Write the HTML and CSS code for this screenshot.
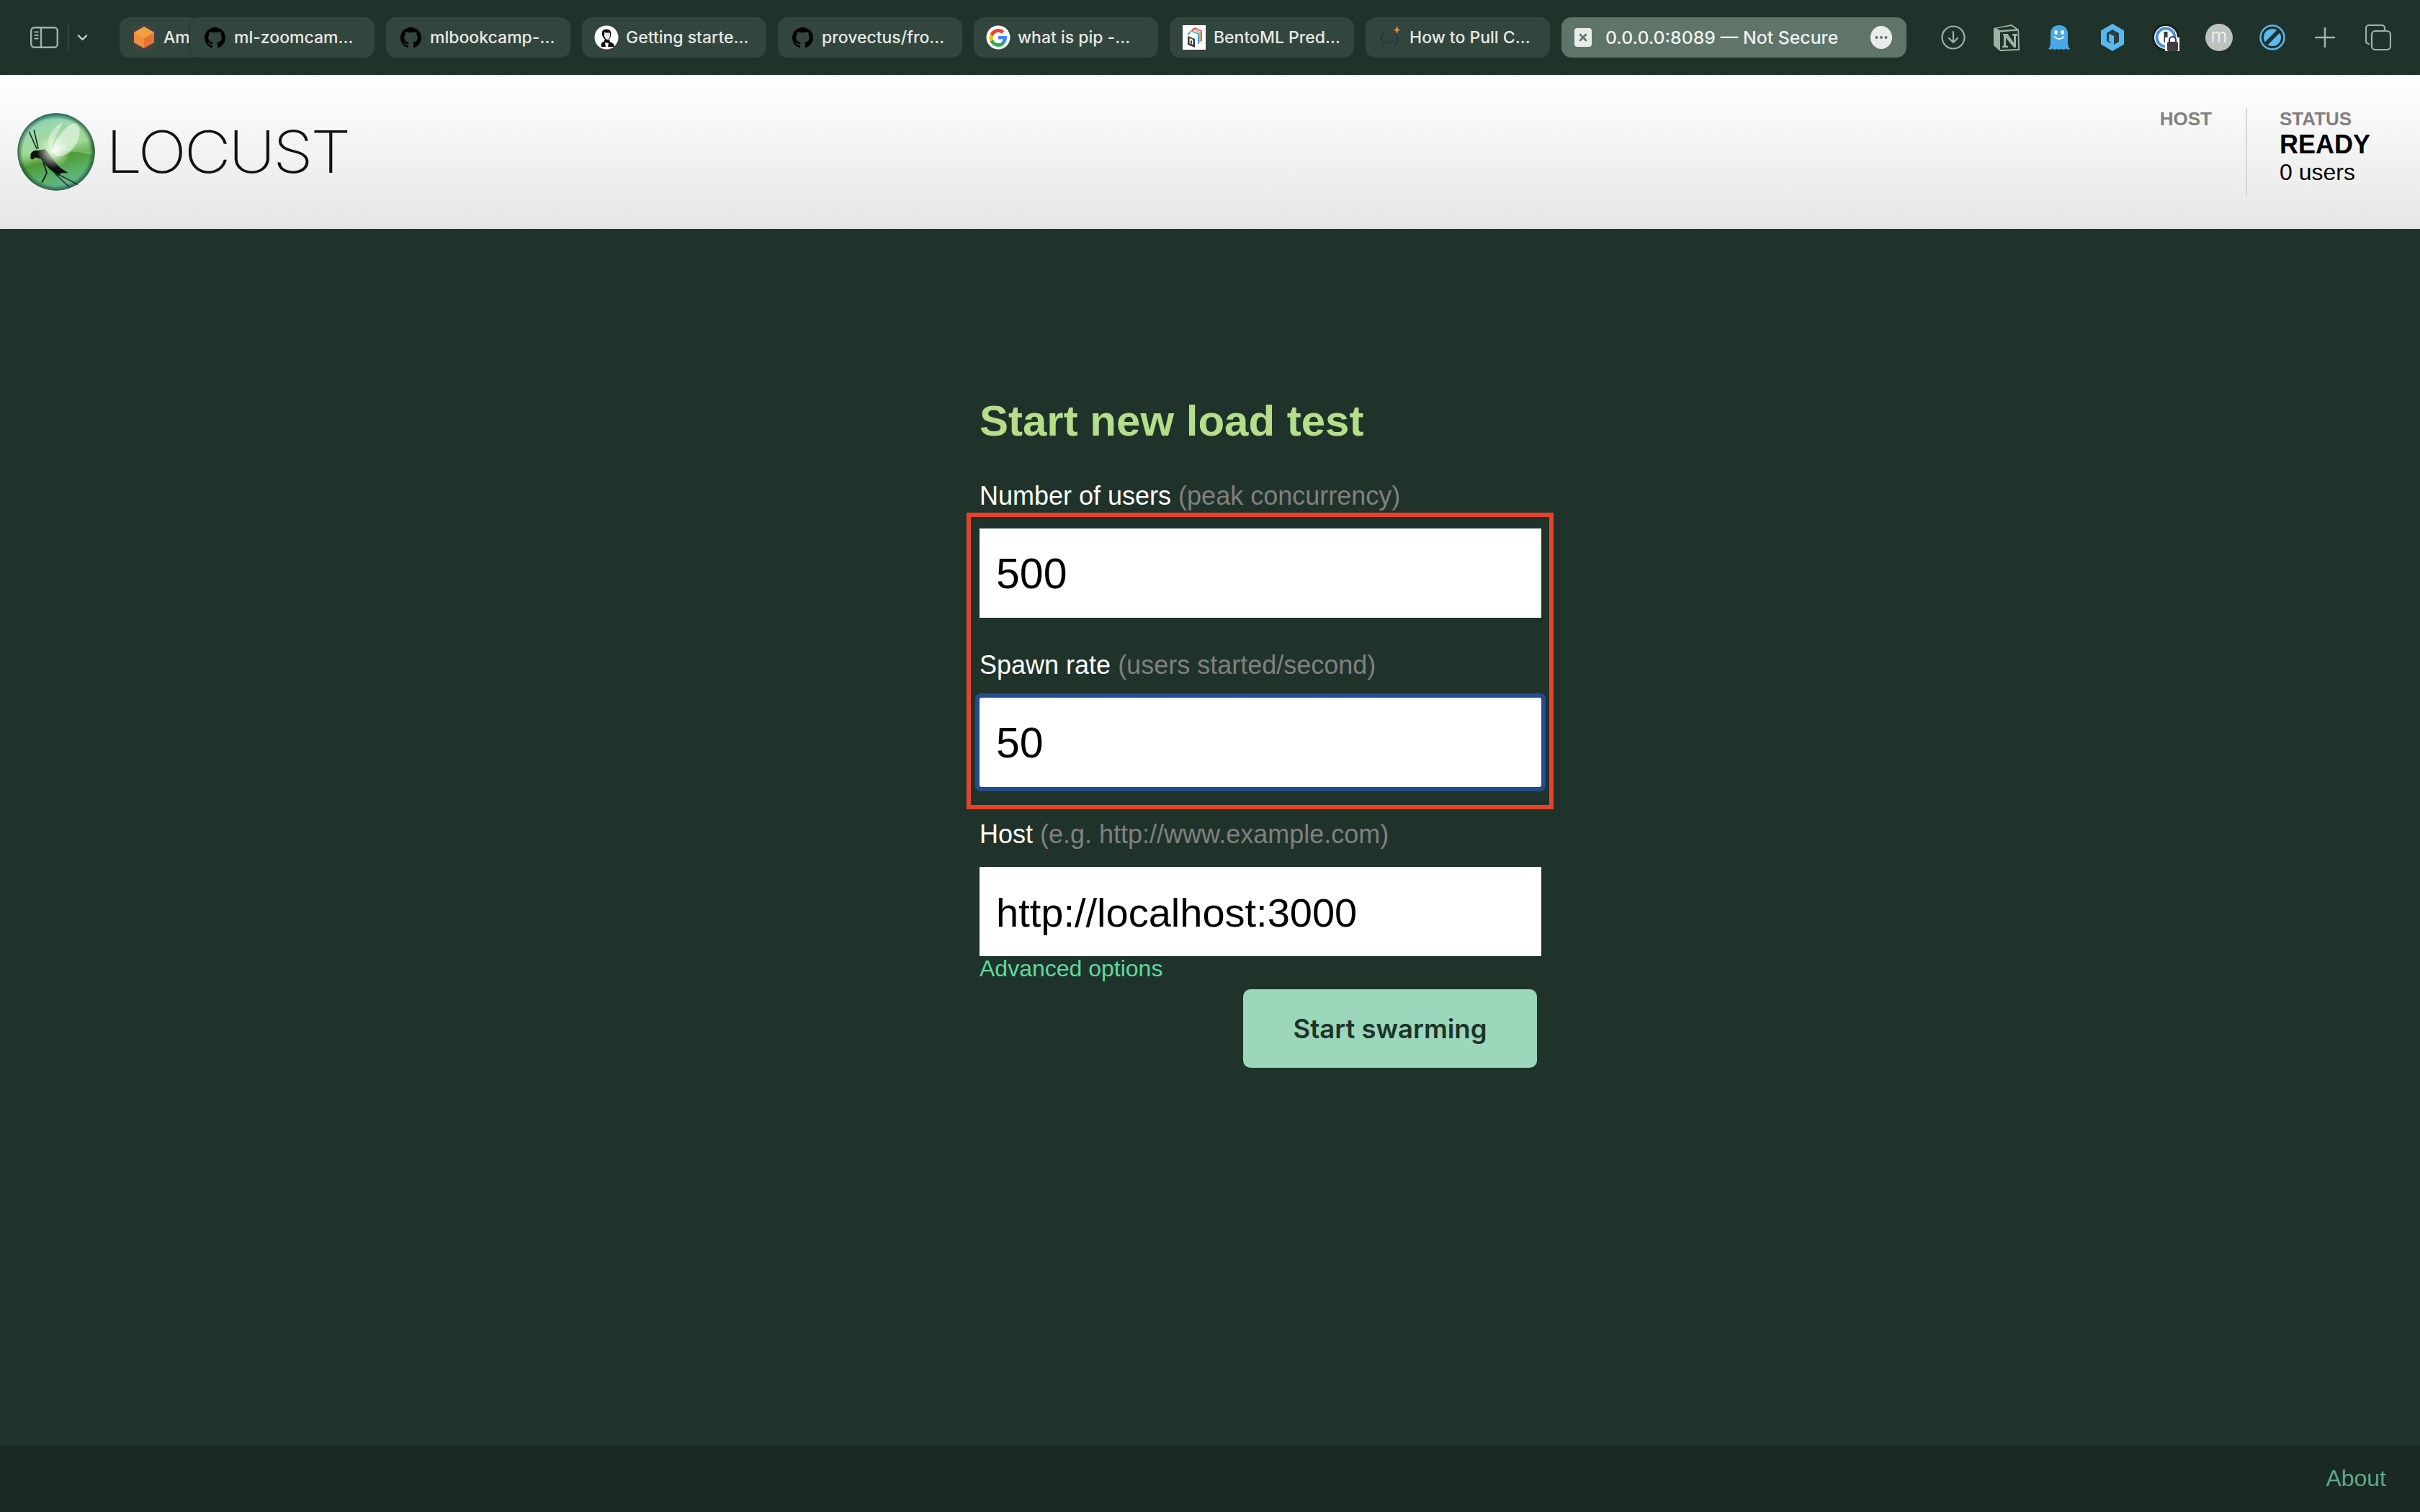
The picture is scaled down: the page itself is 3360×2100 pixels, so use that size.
FILE: index.html
```html
<!DOCTYPE html>
<html lang="en">
<head>
<meta charset="utf-8">
<title>Locust</title>
<link rel="stylesheet" href="styles.css">
</head>
<body>
<div class="toolbar">
  <div class="side-controls">
    <svg class="ico-sidebar" viewBox="0 0 39 30"><rect x="1.2" y="1.2" width="36.6" height="27.6" rx="4.5" fill="none" stroke="#9db3a8" stroke-width="2.4"/><path d="M15 1v28" stroke="#9db3a8" stroke-width="2.4"/><path d="M5.5 7.5h6M5.5 12h6M5.5 16.5h6" stroke="#9db3a8" stroke-width="2"/></svg>
    <span class="vsep"></span>
    <svg class="ico-chevron" viewBox="0 0 14 9"><path d="M1.5 1.5 7 7l5.5-5.5" fill="none" stroke="#c3d4cb" stroke-width="2.4" stroke-linecap="round" stroke-linejoin="round"/></svg>
  </div>
  <div class="tabs">
    <div class="tab tab-first">
      <span class="fav"><svg viewBox="0 0 34 34"><rect width="34" height="34" rx="7" fill="#3e4544"/><path d="M17 2 31 10v14L17 32 3 24V10z" fill="#e6762f"/><path d="M17 2 31 10 17 18 3 10z" fill="#f2a040"/><path d="M3 10l14 8v14L3 24z" fill="#f08f38"/></svg></span>
      <span class="tab-text">Am</span>
    </div>
    <div class="tab tab-over">
      <span class="fav"><svg class="gh" viewBox="0 0 16 16"><use href="#octo"/></svg></span>
      <span class="tab-text">ml-zoomcam…</span>
    </div>
    <div class="tab">
      <span class="fav"><svg class="gh" viewBox="0 0 16 16"><use href="#octo"/></svg></span>
      <span class="tab-text">mlbookcamp-…</span>
    </div>
    <div class="tab">
      <span class="fav"><svg viewBox="0 0 34 34"><circle cx="17" cy="17" r="16.5" fill="#fff"/><path d="M11 9c1-4 10-5 12 0 1 3 0 8-2 11l1 3 5 3 1 4H10c-1-3 0-6 3-7l2-3c-3-3-5-7-4-11z" fill="#111"/><path d="M14 10c3 1 6 0 8 1 0 3 0 7-2 9-3 1-5-2-6-5z" fill="#e8e8e8"/><path d="M15 24l5 1-1 5h-3z" fill="#fff"/></svg></span>
      <span class="tab-text">Getting starte…</span>
    </div>
    <div class="tab">
      <span class="fav"><svg class="gh" viewBox="0 0 16 16"><use href="#octo"/></svg></span>
      <span class="tab-text">provectus/fro…</span>
    </div>
    <div class="tab">
      <span class="fav"><svg viewBox="0 0 34 34"><circle cx="17" cy="17" r="16.5" fill="#fff"/><path d="M29 17.3c0-.9-.1-1.7-.2-2.4H17v4.6h6.8c-.3 1.5-1.2 2.8-2.5 3.7v3h4c2.300-2.200 3.700-5.300 3.700-8.900z" fill="#4285f4"/><path d="M17 30c3.400 0 6.200-1.100 8.300-3l-4-3.100c-1.100.8-2.600 1.200-4.300 1.200-3.300 0-6-2.200-7-5.200H5.800v3.200C7.900 27 12.100 30 17 30z" fill="#34a853"/><path d="M10 19.900c-.5-1.600-.5-3.200 0-4.800v-3.200H5.800c-1.800 3.500-1.800 7.700 0 11.200z" fill="#fbbc05"/><path d="M17 9.900c1.900 0 3.500.6 4.800 1.900l3.600-3.600C23.200 6.200 20.300 5 17 5 12.100 5 7.900 8 5.800 11.900L10 15.100c1-3 3.700-5.200 7-5.200z" fill="#ea4335"/></svg></span>
      <span class="tab-text">what is pip -…</span>
    </div>
    <div class="tab">
      <span class="fav"><svg viewBox="0 0 32 34"><rect width="32" height="34" fill="#fff"/><path d="M7 15 7 27l10 4V19z" fill="#3a3a3a"/><path d="M9.500 18v7l5 2v-7z" fill="#fff"/><path d="M11 21v4l2 .8v-4z" fill="#3a3a3a"/><path d="M7 13l5-5 10 4 0 14" fill="none" stroke="#2aa6c9" stroke-width="1.800"/><path d="M10 10l5-4 9 4v14" fill="none" stroke="#e3a93a" stroke-width="1.800"/><path d="M13 7l4-3 9 4v14" fill="none" stroke="#d6409f" stroke-width="1.800"/></svg></span>
      <span class="tab-text">BentoML Pred…</span>
    </div>
    <div class="tab">
      <span class="fav"><svg viewBox="0 0 34 34"><path d="M9 9C5 9 7 16 4 18c3 2 1 10 5 10M24 12c3 1 1 5 3 6-2 2 0 8-4 10" fill="none" stroke="#25324a" stroke-width="1.800"/><path d="M11 21c2 4 8 4 10 0" fill="none" stroke="#25324a" stroke-width="1.800"/><circle cx="12.500" cy="14" r="1" fill="#25324a"/><circle cx="20" cy="14" r="1" fill="#25324a"/><path d="M27 1l1 4 3 1-3 2-1 4-2-4-3-1 3-2z" fill="#e98a2b"/></svg></span>
      <span class="tab-text">How to Pull C…</span>
    </div>
    <div class="tab tab-active">
      <span class="fav-active"><svg viewBox="0 0 24 26"><rect width="24" height="26" rx="4" fill="#e9ecea"/><path d="M8 9l8 8M16 9l-8 8" stroke="#5f7569" stroke-width="2.600" stroke-linecap="round"/></svg></span>
      <span class="tab-text tab-text-active">0.0.0.0:8089 — Not Secure</span>
      <svg class="ico-more" viewBox="0 0 30 32"><ellipse cx="15" cy="16" rx="15" ry="16" fill="#e9ecea"/><circle cx="8.500" cy="16" r="2" fill="#5f7569"/><circle cx="15" cy="16" r="2" fill="#5f7569"/><circle cx="21.500" cy="16" r="2" fill="#5f7569"/></svg>
    </div>
  </div>
  <div class="tool-icons">
    <span class="tool"><svg width="34" height="34" viewBox="0 0 34 34"><circle cx="17" cy="17" r="15.500" fill="none" stroke="#9db3a8" stroke-width="2.200"/><path d="M17 9v15M11 18l6 6 6-6" fill="none" stroke="#9db3a8" stroke-width="2.200" stroke-linecap="round" stroke-linejoin="round"/></svg></span>
    <span class="tool"><svg width="38" height="38" viewBox="0 0 38 38"><path d="M1 6 26 1l10 7 1 29-27 1-9-8z" fill="#9db3a8"/><path d="M5 6.500 25.500 3 32 7.500 10 9z" fill="#203329"/><path d="M10 11.500l24.500-1.800.5 25.300-25 1z" fill="#203329"/><path d="M14 14h6.500l8.500 12.500V17l-2-.8V14h7v2.200l-2 .8V33h-3L18 19.500V30l3 1v2h-8v-2l2-1V16.500l-1-.5z" fill="#9db3a8"/></svg></span>
    <span class="tool"><svg width="30" height="35" viewBox="0 0 30 35"><path d="M15 0C7 0 3 5 3 12v12c0 4-1 7-3 9 2 1 4 .8 6-.5 1.500 1.800 4 1.800 5.500.3 2 1.500 5 1.500 7 0 1.500 1.500 4 1.500 5.500-.3 2 1.300 4 1.500 6 .5-2-2-3-5-3-9V12C27 5 23 0 15 0z" fill="#4aa8e8"/><ellipse cx="10.500" cy="10" rx="2.200" ry="3" fill="#fff"/><ellipse cx="19.500" cy="10" rx="2.200" ry="3" fill="#fff"/><path d="M8.500 16c3.500 4 9.500 4 13 0" fill="none" stroke="#fff" stroke-width="1.800" stroke-linecap="round"/></svg></span>
    <span class="tool"><svg width="32" height="38" viewBox="0 0 32 38"><path d="M16 0 32 9.500v19L16 38 0 28.500v-19z" fill="#56b8f0"/><path d="M16 8 25 13v12l-7 4V17l-4-2v12l-6-3V13z" fill="#2c3e40"/><path d="M14 15l-2-1-1 1v9l3 1.500z" fill="#56b8f0"/></svg></span>
    <span class="tool"><svg width="38" height="38" viewBox="0 0 38 38"><circle cx="19" cy="19" r="19" fill="#14211b"/><circle cx="19" cy="19" r="16" fill="#fff"/><circle cx="19" cy="19" r="12.500" fill="none" stroke="#4c8fe0" stroke-width="4"/><rect x="16.500" y="11" width="5" height="15" fill="#2c3e40"/><rect x="18" y="19" width="20" height="19" fill="#fff"/><path d="M24 25v-2.500a4.500 4.500 0 0 1 9 0V25" fill="none" stroke="#3f3f3f" stroke-width="2.200"/><rect x="21" y="25" width="15" height="13" rx="2" fill="#3f3f3f"/></svg></span>
    <span class="tool"><span class="avatar">m</span></span>
    <span class="tool"><svg width="36" height="36" viewBox="0 0 36 36"><circle cx="18" cy="18" r="16.500" fill="none" stroke="#5ab9ef" stroke-width="2.400"/><circle cx="18" cy="18" r="12" fill="#5ab9ef"/><path d="M9 27 27 9" stroke="#203329" stroke-width="5.500"/></svg></span>
    <span class="tool"><svg width="28" height="28" viewBox="0 0 28 28"><path d="M14 1v26M1 14h26" stroke="#9db3a8" stroke-width="2.600" stroke-linecap="round"/></svg></span>
    <span class="tool"><svg width="36" height="36" viewBox="0 0 36 36"><path d="M6 27H5a4 4 0 0 1-4-4V5a4 4 0 0 1 4-4h18a4 4 0 0 1 4 4v3" fill="none" stroke="#9db3a8" stroke-width="2.200"/><rect x="9" y="9" width="26" height="26" rx="5" fill="none" stroke="#9db3a8" stroke-width="2.200"/></svg></span>
  </div>
</div>

<header class="site-header">
  <div class="brand">
    <svg class="logo-ball" viewBox="43 48 322 322">
      <defs>
        <linearGradient id="ballBase" x1="0.2" y1="0" x2="0.5" y2="1">
          <stop offset="0" stop-color="#5fb9b4"/>
          <stop offset="0.25" stop-color="#8fd0a4"/>
          <stop offset="0.5" stop-color="#93d07f"/>
          <stop offset="0.62" stop-color="#4c9a36"/>
          <stop offset="0.8" stop-color="#5aae62"/>
          <stop offset="1" stop-color="#62b88e"/>
        </linearGradient>
        <radialGradient id="ballGlow" cx="0.45" cy="0.5" r="0.32">
          <stop offset="0" stop-color="#fff" stop-opacity="0.95"/>
          <stop offset="0.5" stop-color="#e6f6d8" stop-opacity="0.55"/>
          <stop offset="1" stop-color="#e6f6d8" stop-opacity="0"/>
        </radialGradient>
        <radialGradient id="ballEdge" cx="0.5" cy="0.5" r="0.5">
          <stop offset="0.86" stop-color="#174d3a" stop-opacity="0"/>
          <stop offset="1" stop-color="#123c30" stop-opacity="0.75"/>
        </radialGradient>
      </defs>
      <circle cx="204" cy="209" r="160" fill="url(#ballBase)"/>
      <path d="M46 235C120 195 290 200 362 225 350 190 345 150 320 110 280 60 130 50 80 115 58 145 46 190 46 235z" fill="#b6e8b4" fill-opacity="0.35"/>
      <circle cx="204" cy="209" r="160" fill="url(#ballEdge)"/>
      <path d="M92 125l32 72M112 118l18 78" stroke="#16241e" stroke-width="4.500" fill="none"/>
      <path d="M98 222C100 208 110 203 125 203L158 198C175 215 195 250 222 275L255 296 225 296 215 308C190 295 160 265 140 238L118 232 108 240 98 238z" fill="#0c1210"/>
      <path d="M150 250l15 46-20 40" fill="none" stroke="#0c1210" stroke-width="5"/>
      <path d="M205 298l88 46M200 300l60 56" stroke="#1c2f33" stroke-width="4.500" fill="none"/>
      <circle cx="205" cy="205" r="110" fill="url(#ballGlow)"/>
      <path d="M178 195c-20-38 10-90 52-110-8 30-35 70-52 110z" fill="#fff" fill-opacity="0.4"/>
      <path d="M190 205c5-45 50-105 90-115 25 5 30 50 5 90-20 32-55 55-85 45z" fill="#fff" fill-opacity="0.5"/>
    </svg>
    <span class="logo-text">LOCUST</span>
  </div>
  <div class="status-bar">
    <div class="stat stat-host">
      <div class="stat-label">HOST</div>
    </div>
    <div class="stat stat-status">
      <div class="stat-label">STATUS</div>
      <div class="stat-value">READY</div>
      <div class="stat-sub">0 users</div>
    </div>
  </div>
</header>

<main class="main">
  <form class="start-form">
    <h2 class="form-title">Start new load test</h2>
    <label class="field-label field-label-first">Number of users <span class="hint">(peak concurrency)</span></label>
    <input class="field-input field-num" type="text" value="500">
    <label class="field-label">Spawn rate <span class="hint">(users started/second)</span></label>
    <input class="field-input field-num field-focus" type="text" value="50">
    <label class="field-label">Host <span class="hint">(e.g. http://www.example.com)</span></label>
    <input class="field-input" type="text" value="http://localhost:3000">
    <a class="advanced" href="#">Advanced options</a>
    <div class="actions"><button class="swarm" type="button">Start swarming</button></div>
    <div class="annotation"></div>
  </form>
</main>

<footer class="site-footer"><a class="about" href="#">About</a></footer>

<svg class="sprite" width="0" height="0"><defs><path id="octo" d="M8 0C3.580 0 0 3.580 0 8c0 3.540 2.290 6.530 5.470 7.590.4.070.55-.17.55-.38 0-.19-.01-.82-.01-1.490-2.010.37-2.530-.49-2.690-.94-.09-.23-.48-.94-.82-1.130-.28-.15-.68-.52-.01-.53.63-.01 1.080.58 1.230.82.720 1.210 1.870.87 2.330.66.070-.52.280-.87.510-1.070-1.780-.2-3.640-.89-3.640-3.950 0-.87.310-1.590.820-2.150-.08-.2-.36-1.020.08-2.120 0 0 .670-.21 2.200.82.640-.18 1.320-.27 2-.27s1.360.09 2 .27c1.530-1.040 2.200-.82 2.200-.82.440 1.100.160 1.920.080 2.120.510.560.820 1.270.820 2.150 0 3.070-1.870 3.750-3.650 3.950.290.250.540.730.540 1.480 0 1.070-.01 1.930-.01 2.200 0 .210.150.460.550.380A8.010 8.010 0 0 0 16 8c0-4.420-3.580-8-8-8z"/></defs></svg>
</body>
</html>
```
FILE: styles.css
```css
* { box-sizing: border-box; }
html, body { margin: 0; padding: 0; height: 100%; }
body {
  display: flex;
  flex-direction: column;
  height: 100vh;
  overflow: hidden;
  background: #20332b;
  font-family: "Liberation Sans", Arial, sans-serif;
}
.sprite { position: absolute; }

/* browser toolbar */
.toolbar {
  flex: 0 0 104px;
  display: flex;
  align-items: center;
  background: #20332b;
  padding-left: 42px;
}
.side-controls { display: flex; align-items: center; width: 124px; }
.ico-sidebar { width: 39px; height: 30px; }
.vsep { width: 2px; height: 36px; background: #33463d; margin-left: 13px; margin-right: 11px; }
.ico-chevron { width: 15px; height: 9px; }
.tabs { display: flex; gap: 16px; height: 56px; }
.tab {
  width: 256px;
  height: 56px;
  flex: none;
  display: flex;
  align-items: center;
  gap: 10px;
  padding-left: 17px;
  background: #33463d;
  border-radius: 14px;
  overflow: hidden;
}
.tab-first { width: 112px; margin-right: -30px; }
.tab-over { position: relative; box-shadow: -2px 0 0 #293d33; }
.tab-active { width: 479px; background: #5f7569; position: relative; padding-left: 18px; gap: 19px; }
.fav { width: 34px; height: 34px; flex: none; display: flex; align-items: center; justify-content: center; }
.fav svg { width: 34px; height: 34px; }
.fav svg.gh { width: 29px; height: 29px; fill: #000; }
.fav-active { width: 24px; height: 26px; flex: none; display: flex; }
.fav-active svg { width: 24px; height: 26px; }
.tab-text {
  font-family: Inter, "Liberation Sans", sans-serif;
  font-size: 23px;
  font-weight: 500;
  color: #e6e9e7;
  white-space: nowrap;
}
.tab-text-active { color: #eef1ef; font-size: 24.8px; }
.ico-more { width: 30px; height: 32px; flex: none; margin-left: auto; margin-right: 20px; }
.tool-icons { display: flex; margin-left: 28px; }
.tool { width: 73.8px; height: 40px; display: flex; align-items: center; justify-content: center; }
.avatar {
  width: 38px;
  height: 38px;
  border-radius: 50%;
  background: #bcc2be;
  color: #f4f5f4;
  font-family: Inter, sans-serif;
  font-size: 26px;
  font-weight: 300;
  line-height: 34px;
  text-align: center;
}

/* locust header */
.site-header {
  flex: 0 0 214px;
  display: flex;
  justify-content: space-between;
  background: linear-gradient(#ffffff, #e6e6e6);
}
.brand { display: flex; align-items: center; padding-left: 24px; gap: 15px; }
.logo-ball { width: 108px; height: 108px; flex: none; }
.logo-text {
  font-family: Inter, sans-serif;
  font-weight: 200;
  font-size: 81px;
  letter-spacing: -3px;
  color: #111;
  line-height: 1;
  transform: scaleX(1.105);
  transform-origin: left center;
}
.status-bar { display: flex; margin-top: 46px; height: 122px; }
.stat-host { padding-right: 47px; }
.stat-status { border-left: 2px solid #d6d6d6; padding-left: 45px; width: 242px; }
.stat-label { font-size: 26px; font-weight: 700; color: #808080; line-height: 32px; margin-top: -1px; }
.stat-value { font-size: 36px; font-weight: 700; color: #000; line-height: 40px; }
.stat-sub { font-size: 32px; color: #000; line-height: 37px; }

/* form */
.main { flex: 1 1 auto; display: flex; padding-left: 1360px; }
.start-form { position: relative; width: 780px; padding-top: 231px; display: flex; flex-direction: column; align-items: flex-start; }
.form-title { margin: 0; font-size: 60px; font-weight: 700; color: #b5de8a; line-height: 72px; }
.field-label { display: block; font-size: 36px; line-height: 42px; color: #fff; margin-top: 45px; margin-bottom: 24px; }
.field-label-first { margin-top: 47px; }
.hint { color: #808080; }
.field-input {
  width: 780px;
  height: 124px;
  border: 0;
  border-radius: 0;
  background: #fff;
  color: #000;
  padding: 2px 23px 0;
  font-family: "Liberation Sans", Arial, sans-serif;
  font-size: 56px;
  outline: none;
}
.field-num { font-size: 59px; }
.field-focus { outline: 6px solid #234d8c; border-radius: 2px; }
.advanced { color: #5fd9a0; font-size: 32px; line-height: 38px; margin-top: -2px; text-decoration: none; }
.actions { width: 774px; display: flex; justify-content: flex-end; margin-top: 10px; }
.swarm {
  width: 408px;
  height: 109px;
  border: 0;
  border-radius: 10px;
  background: #9bd8bb;
  color: #1e3328;
  font-family: Inter, "Liberation Sans", sans-serif;
  font-size: 36.5px;
  font-weight: 600;
}
.annotation {
  position: absolute;
  left: -18px;
  top: 394px;
  width: 815px;
  height: 412px;
  border: 6px solid #e8432a;
  pointer-events: none;
}

/* footer */
.site-footer {
  flex: 0 0 92px;
  background: #1a2a23;
  display: flex;
  justify-content: flex-end;
  padding-right: 47px;
  padding-top: 27px;
}
.about { font-size: 32px; line-height: 37px; color: #5fa88a; text-decoration: none; }
```
